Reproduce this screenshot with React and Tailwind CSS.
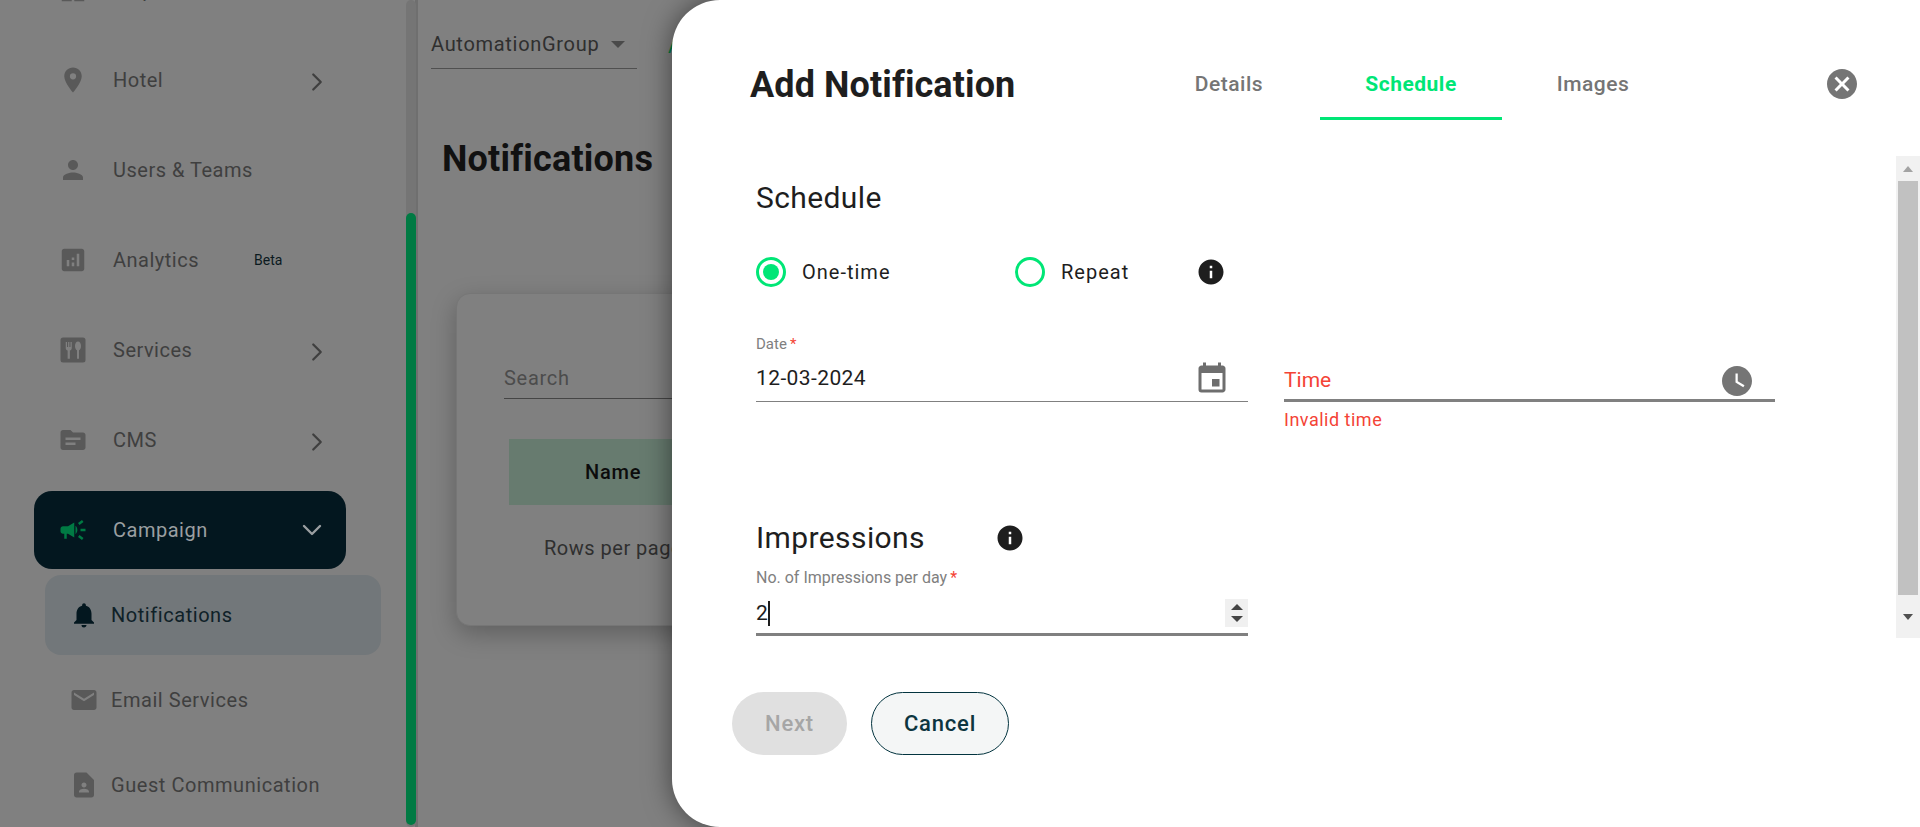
import React from 'react';
import { ChevronRight, ChevronDown } from 'lucide-react';
import {
  MdPlace, MdPerson, MdAnalytics, MdTopic, MdCampaign,
  MdNotifications, MdEmail, MdContactPage, MdInfo, MdCancel, MdEvent, MdWatchLater, MdDashboard,
} from 'react-icons/md';

const FONT = 'font-["Roboto","Liberation_Sans",sans-serif]';

// box with fork and spoon, no matching icon in the packages
const ServicesIcon = ({ size, className }) => (
  <svg width={size} height={size} viewBox="0 0 24 24" className={className}>
    <rect x="2" y="2" width="20" height="20" rx="2" fill="currentColor" />
    <path fill="#808080" d="M6.2 5.5h1v4h.9v-4h1v4h.9v-4h1v5c0 1-.7 1.7-1.5 1.9V19H7.7v-6.6c-.8-.2-1.5-.9-1.5-1.9z" />
    <path fill="#808080" d="M16 5.2c1.4 0 2.4 1.6 2.4 3.6 0 1.7-.7 3-1.6 3.4V19h-1.6v-6.8c-.9-.4-1.6-1.7-1.6-3.4 0-2 1-3.6 2.4-3.6z" />
  </svg>
);

const NavItem = ({ icon: Icon, label, arrow, badge }) => (
  <div className="flex items-center h-[90px] pl-[58px] w-[345px]">
    <Icon size={30} className="text-[#595959] shrink-0" />
    <span className="ml-[25px] text-[20px] text-[#3f3f3f] w-[189px] shrink-0 tracking-[0.5px] whitespace-nowrap">{label}</span>
    {badge && <span className="-ml-[48px] text-[14px] text-[#0b1a20]">{badge}</span>}
    {arrow && <ChevronRight size={30} strokeWidth={1.8} className="text-[#3f3f3f] shrink-0 mt-1" />}
  </div>
);

const SubItem = ({ icon: Icon, label, active }) => (
  <div className={`flex items-center h-[80px] ml-[45px] w-[336px] pl-[24px] rounded-[16px] ${active ? 'bg-[#72777a] text-[#0f2128]' : 'text-[#3f3f3f]'}`}>
    <Icon size={30} className={active ? 'text-[#03171f] shrink-0' : 'text-[#595959] shrink-0'} />
    <span className="ml-[12px] -mt-[1px] text-[20px] tracking-[0.55px]">{label}</span>
  </div>
);

const InfoIcon = () => <MdInfo size={30} className="text-[#1e1e1e]" />;

const Radio = ({ checked, label, width }) => (
  <div className={`flex items-center ${width}`}>
    <span className="w-[30px] h-[30px] rounded-full border-[3px] border-[#00e676] flex items-center justify-center">
      {checked && <span className="w-[16px] h-[16px] rounded-full bg-[#00e676]" />}
    </span>
    <span className="ml-[16px] text-[20px] text-[#1e1e1e] tracking-[1px]">{label}</span>
  </div>
);

const Star = () => <span className="text-[#f44336] ml-[3px]">*</span>;

const App = () => (
  <div className={`relative w-[1920px] h-[827px] overflow-hidden bg-[#808080] ${FONT}`}>
    {/* background page, dimmed */}
    <div className="flex h-full">
      <aside className="relative w-[418px] shrink-0 border-r-[3px] border-[#6f6f6f] h-full">
        <div className="-mt-[55px]">
          <NavItem icon={MdDashboard} label="Maps" />
          <NavItem icon={MdPlace} label="Hotel" arrow />
          <NavItem icon={MdPerson} label="Users & Teams" />
          <NavItem icon={MdAnalytics} label="Analytics" badge="Beta" />
          <NavItem icon={ServicesIcon} label="Services" arrow />
          <NavItem icon={MdTopic} label="CMS" arrow />
          <div className="flex items-center h-[78px] w-[312px] ml-[34px] mt-[6px] pl-[24px] rounded-[18px] bg-[#03171f]">
            <MdCampaign size={30} className="text-[#007a43] shrink-0" />
            <span className="ml-[25px] text-[20px] text-[#9a9fa1] w-[183px] shrink-0 tracking-[0.5px]">Campaign</span>
            <ChevronDown size={32} strokeWidth={1.8} className="text-[#9a9fa1]" />
          </div>
          <div className="mt-[6px]">
            <SubItem icon={MdNotifications} label="Notifications" active />
            <div className="mt-[5px]"><SubItem icon={MdEmail} label="Email Services" /></div>
            <div className="mt-[5px]"><SubItem icon={MdContactPage} label="Guest Communication" /></div>
          </div>
        </div>
        {/* sidebar scrollbar */}
        <div className="absolute top-0 bottom-0 left-[406px] w-[10px] rounded-full bg-[#757575]">
          <div className="absolute top-[213px] bottom-[2px] left-0 right-0 rounded-full bg-[#007a43]" />
        </div>
      </aside>

      <main className="flex-1 pl-[13px]">
        <div className="flex items-center mt-[19px]">
          <div className="flex items-center w-[206px] h-[50px] border-b border-[#505050] text-[20px] text-[#2f2f2f] tracking-[0.7px] whitespace-nowrap">
            AutomationGroup
            <span className="ml-[12px] mt-[2px] w-0 h-0 border-x-[7px] border-x-transparent border-t-[7px] border-t-[#4a4a4a]" />
          </div>
          {/* mostly hidden behind the dialog */}
          <span className="ml-[31px] mt-[3px] text-[20px] text-[#007a43]">A</span>
        </div>
        <h1 className="mt-[66px] ml-[11px] text-[36px] leading-[48px] font-bold text-[#111] tracking-[0.2px]">Notifications</h1>
        <div className="ml-[25px] mt-[110px] w-[500px] h-[333px] rounded-[14px] bg-[#808080] shadow-[0_8px_24px_rgba(0,0,0,0.25)] border border-[#767676] pt-[63px] pl-[47px]">
          <div className="w-[300px] h-[42px] border-b border-[#454545] text-[20px] text-[#4c4c4c] tracking-[0.7px] flex items-center">Search</div>
          <div className="ml-[5px] mt-[40px] w-[300px] h-[66px] bg-[#677b6f] flex items-center pl-[76px] text-[20px] font-medium text-[#0c0c0c] tracking-[0.8px]">Name</div>
          <div className="ml-[40px] mt-[28px] text-[20px] text-[#2f2f2f] tracking-[0.5px]">Rows per page</div>
        </div>
      </main>
    </div>

    {/* dialog */}
    <div className="absolute left-[672px] top-0 bottom-0 right-0 bg-white rounded-l-[48px] shadow-[0_0_28px_rgba(0,0,0,0.5)]">
      <div className="flex items-start h-[120px]">
        <h2 className="ml-[78px] mt-[64px] w-[388px] text-[36px] leading-[42px] font-bold text-[#1e1e1e] tracking-[0.1px] whitespace-nowrap">Add Notification</h2>
        <div className="flex h-[120px]">
          <div className="w-[182px] pt-[71px] text-center text-[21px] leading-[26px] font-medium text-[#757575] tracking-[0.5px]">Details</div>
          <div className="w-[182px] h-[120px] pt-[71px] text-center text-[21px] leading-[26px] font-bold text-[#00e676] border-b-[3px] border-[#00e676] tracking-[0.5px]">Schedule</div>
          <div className="w-[182px] pt-[71px] text-center text-[21px] leading-[26px] font-medium text-[#757575] tracking-[0.5px]">Images</div>
        </div>
        <MdCancel size={36} className="text-[#757575] ml-[140px] mt-[66px]" />
      </div>

      <div className="relative">
        {/* form */}
        <div className="ml-[84px] pt-[60px] w-[1020px]">
          <h3 className="text-[30px] leading-[36px] text-[#1e1e1e] tracking-[0.4px]">Schedule</h3>
          <div className="flex items-center mt-[40px] h-[32px]">
            <Radio checked label="One-time" width="w-[259px]" />
            <Radio label="Repeat" width="w-[181px]" />
            <InfoIcon />
          </div>
          <div className="flex mt-[47px]">
            <div className="w-[492px]">
              <div className="text-[15px] leading-[18px] text-[#808080]">Date<Star /></div>
              <div className="flex items-center justify-between h-[49px] pt-[4px] border-b border-[#808080] text-[21px] text-[#1e1e1e] tracking-[0.4px] pr-[18px]">
                12-03-2024
                <MdEvent size={36} className="text-[#6e6e6e]" />
              </div>
            </div>
            <div className="ml-[36px] w-[491px]">
              <div className="mt-[23px] flex items-center justify-between h-[44px] pt-[4px] border-b-[3px] border-[#808080] text-[21px] text-[#f44336] pr-[20px]">
                Time
                <MdWatchLater size={36} className="text-[#757575]" />
              </div>
              <div className="mt-[7px] text-[18px] leading-[22px] text-[#f44336] tracking-[0.5px]">Invalid time</div>
            </div>
          </div>
          <div className="flex items-center mt-[89px] h-[36px]">
            <h3 className="w-[239px] text-[30px] leading-[36px] text-[#1e1e1e] tracking-[0.4px]">Impressions</h3>
            <InfoIcon />
          </div>
          <div className="mt-[13px] text-[16px] leading-[18px] text-[#808080]">No. of Impressions per day<Star /></div>
          <div className="relative flex items-center w-[492px] h-[49px] pt-[7px] border-b-[3px] border-[#808080] text-[21px] text-[#1e1e1e]">
            2<span className="w-[2px] h-[25px] bg-[#1e1e1e]" />
            <div className="absolute right-0 top-[12px] w-[23px] h-[28px] bg-[#f0f0f0] flex flex-col items-center justify-center gap-[6px]">
              <span className="w-0 h-0 border-x-[6px] border-x-transparent border-b-[6px] border-b-[#444]" />
              <span className="w-0 h-0 border-x-[6px] border-x-transparent border-t-[6px] border-t-[#444]" />
            </div>
          </div>
        </div>

        {/* content scrollbar */}
        <div className="absolute left-[1224px] top-[36px] w-[24px] h-[482px] bg-[#f1f1f1] flex flex-col">
          <div className="h-[25px] flex items-center justify-center">
            <span className="w-0 h-0 border-x-[5px] border-x-transparent border-b-[6px] border-b-[#a3a3a3]" />
          </div>
          <div className="ml-[2px] w-[20px] h-[414px] bg-[#c1c1c1]" />
          <div className="flex-1 flex items-center justify-center">
            <span className="w-0 h-0 border-x-[5px] border-x-transparent border-t-[6px] border-t-[#505050]" />
          </div>
        </div>
      </div>

      {/* actions */}
      <div className="absolute left-[60px] top-[692px] flex gap-[24px]">
        <button className="w-[115px] h-[63px] rounded-full bg-[#e0e0e0] text-[22px] font-medium text-[#a6a6a6] tracking-[0.8px]">Next</button>
        <button className="w-[138px] h-[63px] rounded-full bg-[#f4f6f6] border border-[#03343f] text-[22px] font-medium text-[#0d3540] tracking-[0.8px]">Cancel</button>
      </div>
    </div>
  </div>
);

export default App;
